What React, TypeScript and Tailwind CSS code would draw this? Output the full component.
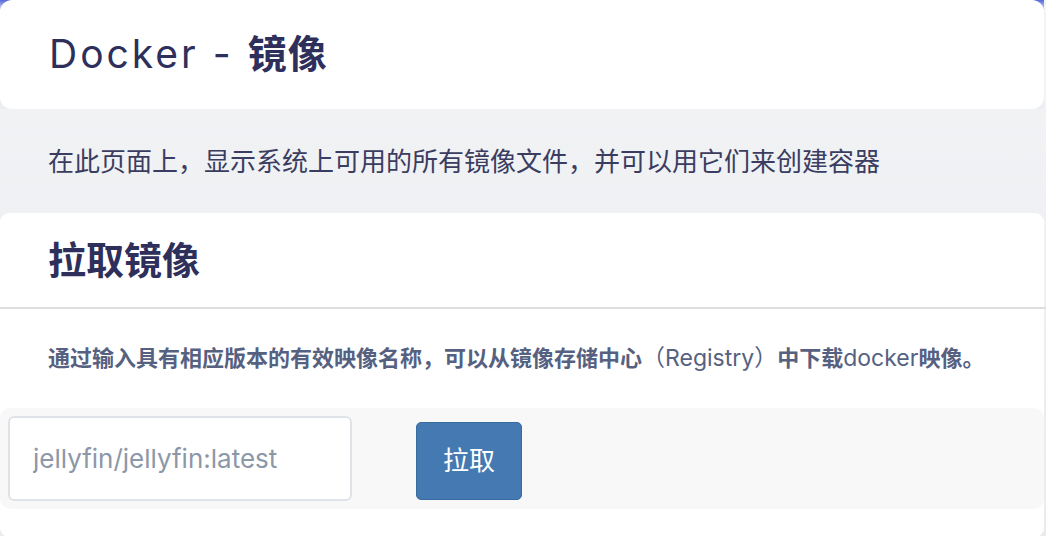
const sans = "font-['Inter','Noto_Sans_CJK_SC',sans-serif]";

export default function App() {
  return (
    <div className={`${sans} min-h-[536px] w-full bg-gradient-to-b from-[#f3f4f6] to-[#eaebee] pr-[2px]`}>
      <div className="bg-gradient-to-b from-[#5a67d8] via-[#eceef1] via-[10%] to-[#eceef1]">
        <div className="flex h-[109px] items-center rounded-[12px] bg-white pl-[49px]">
          <h1 className="text-[39px] tracking-[3px] text-[#2e2f5b]">
            Docker - <span className="font-bold tracking-[1px]">镜像</span>
          </h1>
        </div>
      </div>

      <div className="flex h-[104px] items-center pl-[48px]">
        <p className="text-[26px] text-[#3a3c60]">
          在此页面上，显示系统上可用的所有镜像文件，并可以用它们来创建容器
        </p>
      </div>

      <div className="rounded-[9px] bg-white pb-[28px]">
        <div className="flex h-[94px] items-center pl-[48px]">
          <h2 className="text-[38px] font-bold text-[#2e2f5b]">拉取镜像</h2>
        </div>
        <div className="mr-[-2px] h-[2px] bg-[#dedede]" />
        <div className="flex h-[99px] items-center pl-[48px]">
          <p className="text-[22px] font-bold text-[#566181]">
            通过输入具有相应版本的有效映像名称，可以从镜像存储中心
            <span className="text-[23px] font-normal">（Registry）</span>中下载
            <span className="text-[23px] font-normal">docker</span>映像。
          </p>
        </div>
        <div className="flex h-[101px] items-center gap-[64px] rounded-[10px] bg-[#f8f8f8] px-[8px]">
          <input
            className="h-[85px] w-[344px] rounded-[6px] border-2 border-[#dfe3e8] bg-white px-[23px] text-[26px] text-[#333] outline-none placeholder:text-[#8c97a8]"
            placeholder="jellyfin/jellyfin:latest"
          />
          <button className="mt-[4px] h-[78px] w-[106px] rounded-[5px] border border-[#3a6b9f] bg-[#4479b1] text-[26px] text-white">
            拉取
          </button>
        </div>
      </div>
    </div>
  );
}
